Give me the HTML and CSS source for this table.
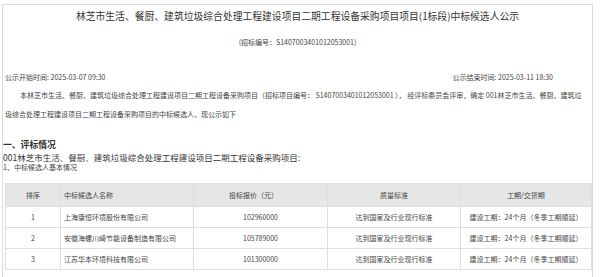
FILE: index.html
```html
<!DOCTYPE html>
<html lang="zh-CN">
<head>
  <meta charset="UTF-8" />
  <title>中标候选人公示</title>
  <link rel="stylesheet" href="styles.css">
</head>
<body>

  <div class="notice">
    <h1 class="notice-title">林芝市生活、餐厨、建筑垃圾综合处理工程建设项目二期工程设备采购项目项目(1标段)中标候选人公示</h1>
    <div class="notice-code">(招标编号：S1407003401012053001)</div>

    <div class="notice-times">
      <span>公示开始时间: 2025-03-07 09:30</span>
      <span>公示结束时间: 2025-03-11 18:30</span>
    </div>

    <p class="notice-text">本林芝市生活、餐厨、建筑垃圾综合处理工程建设项目二期工程设备采购项目（招标项目编号： S1407003401012053001 ）， 经评标委员会评审，确定 001林芝市生活、餐厨、建筑垃圾综合处理工程建设项目二期工程设备采购项目的中标候选人，现公示如下</p>

    <!-- 评标情况 -->
    <h2 class="section-title">一、评标情况</h2>
    <div class="section-sub">001林芝市生活、餐厨、建筑垃圾综合处理工程建设项目二期工程设备采购项目:</div>
    <div class="section-note">1、中标候选人基本情况</div>

    <table class="result-table">
      <colgroup>
        <col class="c-rank">
        <col class="c-name">
        <col class="c-price">
        <col class="c-quality">
        <col class="c-period">
      </colgroup>
      <thead>
        <tr>
          <th>排序</th>
          <th class="left">中标候选人名称</th>
          <th class="price">投标报价（元）</th>
          <th>质量标准</th>
          <th>工期/交货期</th>
        </tr>
      </thead>
      <tbody>
        <tr>
          <td>1</td>
          <td class="left">上海康恒环境股份有限公司</td>
          <td class="price">102960000</td>
          <td>达到国家及行业现行标准</td>
          <td>建设工期：24个月（冬季工期顺延）</td>
        </tr>
        <tr>
          <td>2</td>
          <td class="left">安徽海螺川崎节能设备制造有限公司</td>
          <td class="price">105789000</td>
          <td>达到国家及行业现行标准</td>
          <td>建设工期：24个月（冬季工期顺延）</td>
        </tr>
        <tr>
          <td>3</td>
          <td class="left">江苏华本环境科技有限公司</td>
          <td class="price">101300000</td>
          <td>达到国家及行业现行标准</td>
          <td>建设工期：24个月（冬季工期顺延）</td>
        </tr>
      </tbody>
    </table>
  </div>

</body>
</html>
```

FILE: styles.css
```css
body {
  margin: 0;
  background: #fff;
  color: #444;
  font-family: "Noto Sans CJK SC", "Liberation Sans", sans-serif;
}

/* outer frame, open at the bottom */
.notice {
  margin: 4px 7px 0 2px;
  border: 1px solid #dcdcdc;
  border-bottom: none;
  height: 272px;
  overflow: hidden;
}

.notice-title {
  margin: 1px 0 0;
  font-size: 9.8px;
  font-weight: normal;
  line-height: 20px;
  text-align: center;
  color: #333;
}

.notice-code {
  margin-top: 10px;
  font-size: 7px;
  line-height: 12px;
  text-align: center;
  color: #444;
}

.notice-times {
  display: flex;
  justify-content: space-between;
  margin-top: 23px;
  padding: 0 39px 0 2px;
  font-size: 7px;
  line-height: 12px;
}

.notice-text {
  margin: 3px 0 0;
  padding: 0 4px 0 2px;
  font-size: 7px;
  line-height: 19px;
  text-indent: 15px;
}

.section-title {
  margin: 16px 0 0;
  font-size: 8.8px;
  font-weight: bold;
  line-height: 10px;
  color: #333;
}

.section-sub {
  margin-top: 2px;
  font-size: 8.5px;
  line-height: 10px;
  color: #333;
}

.section-note {
  font-size: 7px;
  line-height: 10px;
}

/* candidate table */
.result-table {
  margin: 11px 0 0 2px;
  width: 586px;
  border-collapse: collapse;
  table-layout: fixed;
  font-size: 7px;
  color: #444;
}
.c-rank { width: 55px; }
.c-name { width: 133px; }
.c-price { width: 134px; }
.c-quality { width: 133px; }
.c-period { width: 131px; }

.result-table th,
.result-table td {
  border: 1px solid #dedede;
  padding: 0;
  text-align: center;
  white-space: nowrap;
  font-weight: normal;
}
.result-table th {
  height: 22px;
  background: #e6e6e6;
}
.result-table td {
  height: 20px;
}
.result-table .left {
  text-align: left;
  padding-left: 3px;
}
.result-table .price {
  text-align: right;
  padding-right: 49px;
}
```
